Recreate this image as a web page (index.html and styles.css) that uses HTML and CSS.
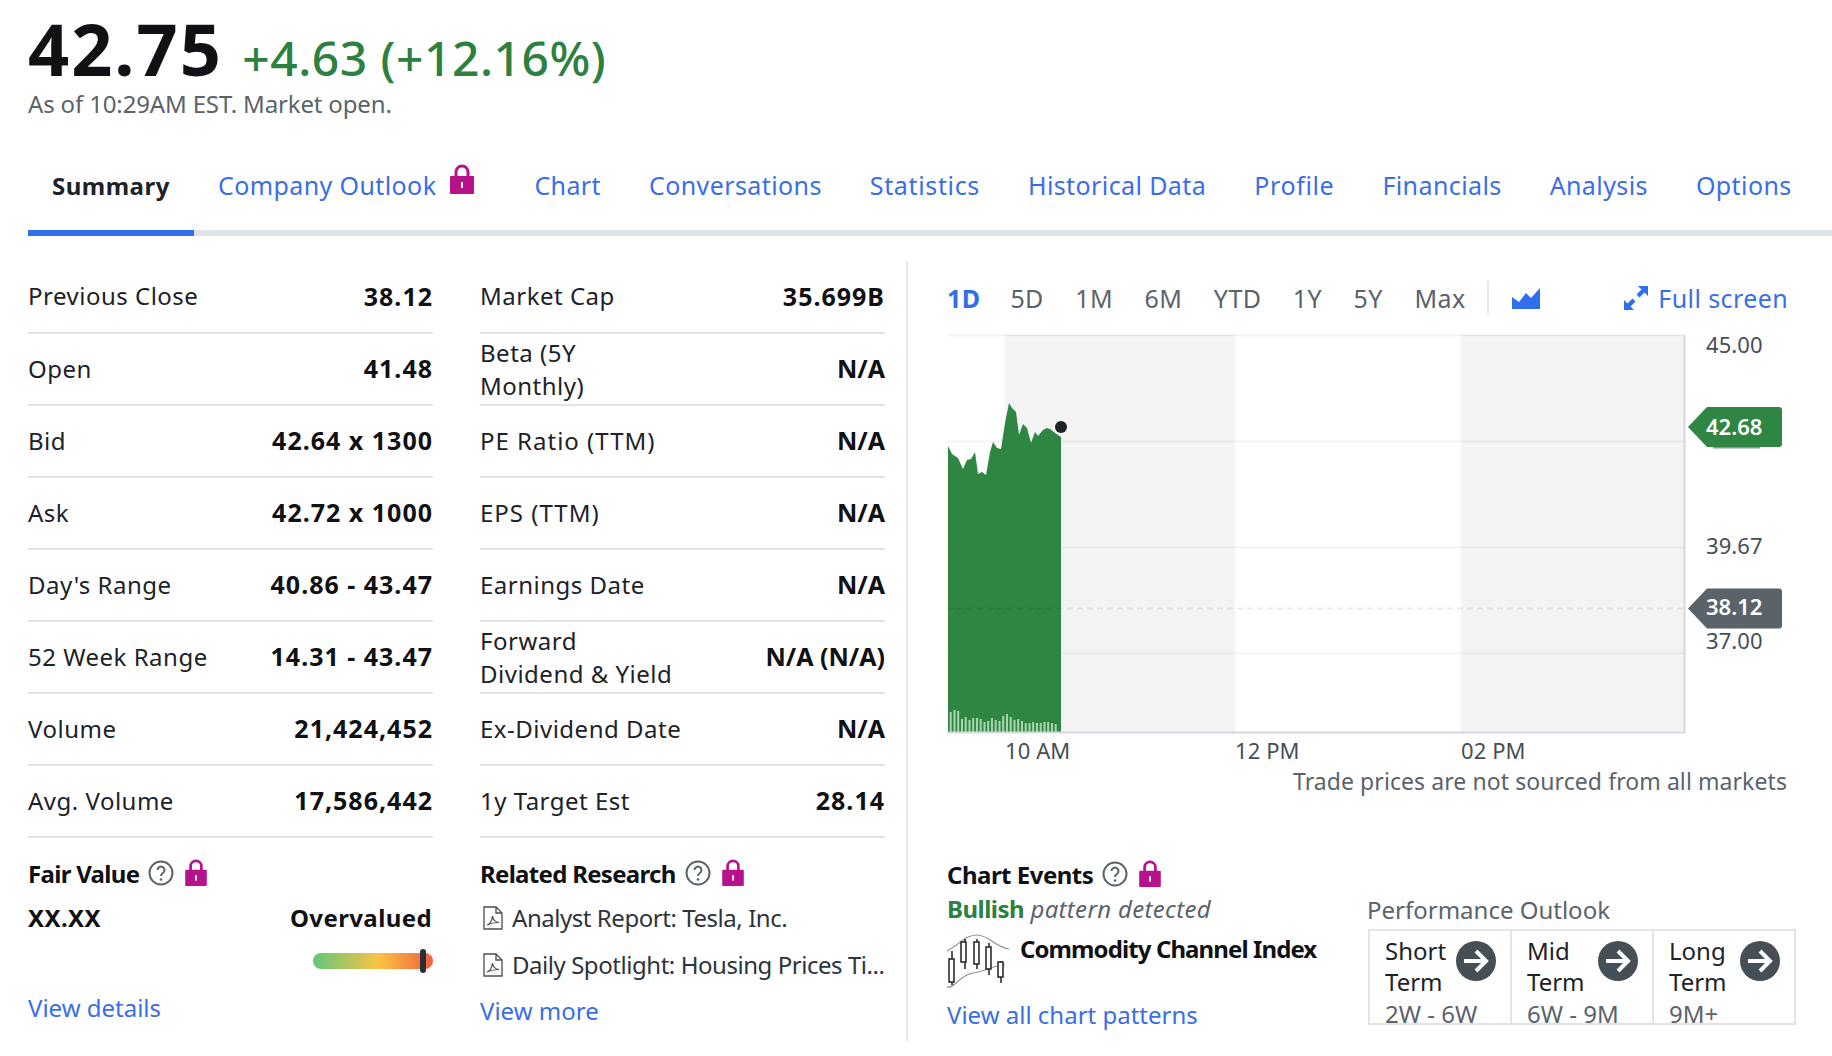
FILE: index.html
```html
<!DOCTYPE html>
<html lang="en">
<head>
  <meta charset="UTF-8" />
  <title>TSLA summary</title>
  <link rel="stylesheet" href="styles.css">
</head>
<body>
  <svg class="defs" width="0" height="0">
    <symbol id="lock" viewBox="0 0 24 30">
      <path d="M6 14V8a6 6 0 0 1 12 0v6" fill="none" stroke="#b8118c" stroke-width="3"/>
      <rect x="0" y="12" width="24" height="18" rx="1" fill="#b8118c"/>
      <rect x="11" y="18" width="2" height="6" fill="#fff"/>
    </symbol>
    <symbol id="help" viewBox="0 0 26 26">
      <circle cx="13" cy="13" r="11.5" fill="none" stroke="#5b636a" stroke-width="2"/>
      <path d="M9.5 10a3.5 3.5 0 1 1 5.4 3c-1.300.9-1.900 1.500-1.900 3" fill="none" stroke="#5b636a" stroke-width="2"/>
      <circle cx="13" cy="19.500" r="1.300" fill="#5b636a"/>
    </symbol>
    <symbol id="pdf" viewBox="0 0 20 24">
      <path d="M1 1h12l6 6v16H1zM13 1v6h6" fill="none" stroke="#464e56" stroke-width="1.300"/>
      <path d="M4 19c3-1 5-5 5.500-9 .5 4 2 6 6.500 6.500-4 0-8 .5-12 2.500z" fill="none" stroke="#464e56" stroke-width="1.200"/>
    </symbol>
    <symbol id="go" viewBox="0 0 40 40">
      <circle cx="20" cy="20" r="20" fill="#464e56"/>
      <path d="M8 20h22M20 10l10 10-10 10" fill="none" stroke="#fff" stroke-width="4"/>
    </symbol>
  </svg>

  <header class="quote">
    <span class="price">42.75</span>
    <span class="change">+4.63 (+12.16%)</span>
    <div class="as-of">As of 10:29AM EST. Market open.</div>
  </header>

  <nav class="tabs">
    <a class="tab active">Summary</a>
    <a class="tab tab-locked">Company Outlook <svg class="tab-lock"><use href="#lock"/></svg></a>
    <a class="tab">Chart</a>
    <a class="tab">Conversations</a>
    <a class="tab tab-wide">Statistics</a>
    <a class="tab">Historical Data</a>
    <a class="tab tab-wide">Profile</a>
    <a class="tab">Financials</a>
    <a class="tab">Analysis</a>
    <a class="tab">Options</a>
  </nav>

  <main class="main">
    <section class="left">
      <div class="col">
        <table class="stats">
          <tr><td>Previous Close</td><th>38.12</th></tr>
          <tr><td>Open</td><th>41.48</th></tr>
          <tr><td>Bid</td><th>42.64 x 1300</th></tr>
          <tr><td>Ask</td><th>42.72 x 1000</th></tr>
          <tr><td>Day's Range</td><th>40.86 - 43.47</th></tr>
          <tr><td>52 Week Range</td><th>14.31 - 43.47</th></tr>
          <tr><td>Volume</td><th>21,424,452</th></tr>
          <tr><td>Avg. Volume</td><th>17,586,442</th></tr>
        </table>
        <div class="block-title">Fair Value <svg class="ic-help"><use href="#help"/></svg> <svg class="ic-lock"><use href="#lock"/></svg></div>
        <div class="fair">
          <b>XX.XX</b>
          <b>Overvalued</b>
        </div>
        <div class="gauge"><i></i></div>
        <a class="link details">View details</a>
      </div>
      <div class="col">
        <table class="stats">
          <tr><td>Market Cap</td><th>35.699B</th></tr>
          <tr><td class="two">Beta (5Y<br>Monthly)</td><th class="na">N/A</th></tr>
          <tr><td class="caps">PE Ratio (TTM)</td><th class="na">N/A</th></tr>
          <tr><td class="caps">EPS (TTM)</td><th class="na">N/A</th></tr>
          <tr><td>Earnings Date</td><th class="na">N/A</th></tr>
          <tr><td class="two">Forward<br>Dividend &amp; Yield</td><th class="na">N/A (N/A)</th></tr>
          <tr><td>Ex-Dividend Date</td><th class="na">N/A</th></tr>
          <tr><td>1y Target Est</td><th>28.14</th></tr>
        </table>
        <div class="block-title">Related Research <svg class="ic-help"><use href="#help"/></svg> <svg class="ic-lock"><use href="#lock"/></svg></div>
        <div class="reports">
          <div class="report"><svg class="ic-pdf"><use href="#pdf"/></svg>Analyst Report: Tesla, Inc.</div>
          <div class="report"><svg class="ic-pdf"><use href="#pdf"/></svg>Daily Spotlight: Housing Prices Ti...</div>
        </div>
        <a class="link more">View more</a>
      </div>
    </section>

    <section class="right">
      <div class="ranges">
        <a class="range on">1D</a>
        <a class="range">5D</a>
        <a class="range">1M</a>
        <a class="range">6M</a>
        <a class="range">YTD</a>
        <a class="range">1Y</a>
        <a class="range">5Y</a>
        <a class="range">Max</a>
        <span class="range-sep"></span>
        <svg class="ic-area" viewBox="0 0 28 21"><path d="M0 9l7 5 7-9 5 5 9-10v21H0z" fill="#2f6fed"/></svg>
        <a class="fullscreen">
          <svg class="ic-full" viewBox="0 0 24 24"><path d="M14 0h10v10l-3.500-3.500-5 5-3-3 5-5zM10 24H0V14l3.500 3.500 5-5 3 3-5 5z" fill="#2f6fed"/></svg>
          Full screen
        </a>
      </div>

      <svg class="chart" viewBox="947 320 885 450">
        <rect x="1005" y="335" width="230" height="397" fill="#f4f4f5"/>
        <rect x="1461" y="335" width="223" height="397" fill="#f4f4f5"/>
        <path d="M947 335.500H1684M947 441.500H1684M947 547.500H1684M947 653.500H1684" stroke="#000" stroke-opacity=".05" stroke-width="2"/>
        <path d="M948 446L952 454 958 458 963 469 967 460 971 459 975 452 978 474 982 472 986 475 990 452 993 442 997 448 1001 449 1005 423 1009 403 1012 408 1016 412 1019 435 1023 424 1027 428 1031 443 1035 432 1038 436 1043 430 1047 428 1050 429 1055 433 1061 437V732H948z" fill="#2f8642"/>
        <path d="M947 608.500H1684" stroke="#000" stroke-opacity=".08" stroke-width="2" stroke-dasharray="6 4"/>
        <path d="M950.700 732v-20M954.500 732v-22M958.200 732v-21M962 732v-13M965.700 732v-15M969.500 732v-12M973.200 732v-14M977 732v-14M980.700 732v-13M984.500 732v-10M988.200 732v-11M992 732v-14M995.700 732v-12M999.500 732v-11M1003.200 732v-16M1007 732v-18M1010.700 732v-15M1014.500 732v-12M1018.200 732v-13M1022 732v-11M1025.700 732v-9M1029.500 732v-9M1033.200 732v-10M1037 732v-9M1040.700 732v-9M1044.500 732v-10M1048.200 732v-10M1052 732v-9M1055.700 732v-8" stroke="#a9d5ae" stroke-width="2"/>
        <path d="M947 732.500H1685M1684.500 335V733" stroke="#d5d8e0" stroke-width="2" fill="none"/>
        <circle cx="1061" cy="427" r="6" fill="#1d2228"/>
        <g class="axis">
          <text x="1706" y="353">45.00</text>
          <text x="1706" y="554">39.67</text>
          <text x="1706" y="649">37.00</text>
          <text x="1005" y="759">10 AM</text>
          <text x="1235" y="759">12 PM</text>
          <text x="1461" y="759">02 PM</text>
        </g>
        <path d="M1713 447.800H1760" stroke="#464e56" stroke-opacity=".6" stroke-width="1.500"/>
        <path d="M1688 427l19-20h72a3 3 0 0 1 3 3v34a3 3 0 0 1-3 3h-72z" fill="#2f8642"/>
        <path d="M1688 608.500l19-20h72a3 3 0 0 1 3 3v34a3 3 0 0 1-3 3h-72z" fill="#5b636a"/>
        <g class="axis-tag">
          <text x="1706" y="435">42.68</text>
          <text x="1706" y="615">38.12</text>
        </g>
      </svg>
      <p class="disclaimer">Trade prices are not sourced from all markets</p>

      <div class="block-title events">Chart Events <svg class="ic-help"><use href="#help"/></svg> <svg class="ic-lock"><use href="#lock"/></svg></div>
      <div class="lower">
        <div class="pattern">
          <div class="bullish"><b>Bullish</b> <em>pattern detected</em></div>
          <div class="pattern-row">
            <svg class="ic-candles" viewBox="0 0 62 56">
              <path d="M0 18C12 12 18 2 30 2s18 12 32 14M0 54c8 2 12-12 26-14s20-8 32-8" fill="none" stroke="#8a9096" stroke-width="1.200"/>
              <g fill="#fff" stroke="#1d2228" stroke-width="1.500">
                <path d="M5 18v34M18 6v30M30 6v30M42 10v32M54 28v22"/>
                <rect x="2" y="26" width="5" height="23"/>
                <rect x="14" y="9" width="5" height="20"/>
                <rect x="27" y="9" width="5" height="22"/>
                <rect x="39" y="14" width="5" height="22"/>
                <rect x="51" y="29" width="5" height="15"/>
              </g>
            </svg>
            <b>Commodity Channel Index</b>
          </div>
          <a class="link all">View all chart patterns</a>
        </div>
        <div class="outlook">
          <div class="outlook-title">Performance Outlook</div>
          <div class="outlook-box">
            <div class="term">
              <div class="term-text">Short Term<small>2W - 6W</small></div>
              <svg class="ic-go"><use href="#go"/></svg>
            </div>
            <div class="term">
              <div class="term-text">Mid Term<small>6W - 9M</small></div>
              <svg class="ic-go"><use href="#go"/></svg>
            </div>
            <div class="term">
              <div class="term-text">Long Term<small>9M+</small></div>
              <svg class="ic-go"><use href="#go"/></svg>
            </div>
          </div>
        </div>
      </div>
    </section>
  </main>
</body>
</html>
```

FILE: styles.css
```css
* {
  box-sizing: border-box;
}

html, body {
  margin: 0;
  height: 1056px;
  overflow: hidden;
}

body {
  padding-left: 28px;
  background: #fff;
  color: #1d2228;
  font-family: "Noto Sans", sans-serif;
  font-size: 24px;
}

.defs {
  position: absolute;
}

a {
  text-decoration: none;
}

.link {
  color: #3a6ee8;
  display: block;
}

/* Kepala harga */
.quote {
  height: 140px;
  padding-top: 5px;
}

.price {
  font-size: 72px;
  font-weight: 700;
  line-height: 86px;
  letter-spacing: 2px;
  color: #0f1114;
}

.change {
  font-size: 48px;
  font-weight: 500;
  letter-spacing: 0.5px;
  margin-left: 13px;
  color: #2c8040;
}

.as-of {
  margin-top: -3px;
  line-height: 32px;
  letter-spacing: -0.15px;
  color: #5b636a;
}

/* Tab */
.tabs {
  display: flex;
  height: 96px;
  border-bottom: 6px solid #e0e4e9;
}

.tab {
  display: flex;
  align-items: center;
  height: 96px;
  padding: 0 24px;
  border-bottom: 6px solid transparent;
  color: #3a6ee8;
  font-size: 25px;
  letter-spacing: 0.4px;
  white-space: nowrap;
}

.tab-wide {
  letter-spacing: 0.65px;
}

.tab.active {
  color: #1d2228;
  font-weight: 700;
  font-size: 24px;
  letter-spacing: 0.5px;
  border-bottom-color: #2f6fed;
}

.tab-lock {
  width: 24px;
  height: 30px;
  margin: 0 36px 12px 14px;
}

.tab-locked {
  padding-right: 0;
}

/* Isi utama */
.main {
  display: flex;
  margin-top: 25px;
  height: 780px;
}

.left {
  display: flex;
  gap: 48px;
  width: 857px;
  flex: none;
}

.col {
  width: 404px;
  flex: none;
}

.stats {
  width: 405px;
  border-collapse: collapse;
}

.stats tr {
  height: 72px;
  border-bottom: 2px solid #e0e4e9;
}

.stats td {
  padding: 0 0 2px;
  line-height: 33px;
  letter-spacing: 0.5px;
  white-space: nowrap;
}

.stats td.two {
  padding: 0 0 1px;
}

.stats td.caps {
  letter-spacing: 1px;
}

.stats th {
  padding: 0 0 2px;
  font-size: 25px;
  font-weight: 700;
  letter-spacing: 1px;
  text-align: right;
  white-space: nowrap;
  color: #0f1114;
}

.stats th.na {
  letter-spacing: 0;
}

.block-title {
  display: flex;
  align-items: center;
  gap: 8px;
  margin-top: 19px;
  height: 32px;
  font-weight: 700;
  letter-spacing: -0.7px;
  color: #0f1114;
}

.ic-help {
  width: 26px;
  height: 26px;
  margin-left: 1px;
}

.ic-lock {
  width: 22px;
  height: 27px;
  margin: -2px 0 0 3px;
}

.fair {
  display: flex;
  justify-content: space-between;
  margin-top: 13px;
  line-height: 32px;
  letter-spacing: 0.4px;
  color: #0f1114;
}

.gauge {
  position: relative;
  width: 120px;
  height: 16px;
  margin: 19px 0 0 285px;
  border-radius: 8px;
  background: linear-gradient(90deg, #62c77b 0%, #fac343 55%, #f0603f 100%);
}

.gauge i {
  position: absolute;
  left: 107px;
  top: -4px;
  width: 6px;
  height: 24px;
  border-radius: 3px;
  background: #2a2f36;
}

.details {
  margin-top: 22px;
}

.reports {
  margin-top: 5px;
}

.report {
  display: flex;
  align-items: center;
  height: 47px;
  letter-spacing: -0.45px;
  white-space: nowrap;
  color: #2d343b;
}

.ic-pdf {
  width: 20px;
  height: 24px;
  margin: 0 9px 0 3px;
  flex: none;
}

.more {
  margin-top: 6px;
}

/* Kolom grafik */
.right {
  flex: none;
  width: 889px;
  margin-left: 21px;
  padding-left: 39px;
  border-left: 2px solid #e6e8ec;
}

.ranges {
  display: flex;
  align-items: center;
  height: 59px;
  padding-top: 15px;
  color: #5b636a;
  font-size: 25px;
  letter-spacing: 0.4px;
}

.range {
  margin-right: 31.5px;
}

.range.on {
  color: #2f6fed;
  font-weight: 700;
  margin-right: 30px;
}

.range-sep {
  width: 2px;
  height: 34px;
  margin-left: -10px;
  background: #e6e8ec;
}

.ic-area {
  width: 28px;
  height: 21px;
  margin-left: 23px;
}

.fullscreen {
  display: flex;
  align-items: center;
  gap: 10px;
  margin-left: auto;
  margin-right: 7px;
  color: #3a6ee8;
}

.ic-full {
  width: 24px;
  height: 24px;
}

.chart {
  display: block;
  width: 885px;
  height: 450px;
  overflow: hidden;
}

.axis text {
  font-family: "Noto Sans", sans-serif;
  font-size: 22px;
  letter-spacing: 0.1px;
  fill: #464e56;
}

.axis-tag text {
  font-family: "Noto Sans", sans-serif;
  font-size: 22px;
  font-weight: 600;
  fill: #fff;
}

.disclaimer {
  margin: -4px 8px 0 0;
  font-size: 23px;
  letter-spacing: 0.08px;
  text-align: right;
  line-height: 30px;
  color: #5b636a;
}

.events {
  margin-top: 62px;
  letter-spacing: -0.5px;
}

.lower {
  display: flex;
}

.pattern {
  width: 421px;
  flex: none;
}

.bullish {
  line-height: 32px;
  margin-top: 3px;
}

.bullish b {
  color: #2c8040;
  letter-spacing: -0.5px;
}

.bullish em {
  color: #5b636a;
  letter-spacing: 0.3px;
}

.pattern-row {
  display: flex;
  gap: 11px;
  height: 58px;
  margin-top: 8px;
}

.pattern-row b {
  line-height: 32px;
  color: #0f1114;
  letter-spacing: -0.9px;
}

.ic-candles {
  width: 62px;
  height: 56px;
}

.all {
  margin-top: 7px;
}

.outlook {
  flex: 1;
}

.outlook-title {
  line-height: 32px;
  margin: 4px 0 0 -1px;
  color: #5b636a;
}

.outlook-box {
  display: flex;
  width: 428px;
  height: 96px;
  margin-top: 3px;
  border: 2px solid #e0e4e9;
  overflow: hidden;
}

.term {
  display: flex;
  flex: 1;
  gap: 9px;
  padding: 4px 0 0 15px;
  border-left: 2px solid #e0e4e9;
}

.term:first-child {
  border-left: 0;
}

.term-text {
  width: 62px;
  line-height: 31px;
}

.term-text small {
  display: block;
  margin-top: 1px;
  font-size: 24px;
  color: #5b636a;
  white-space: nowrap;
}

.ic-go {
  width: 40px;
  height: 40px;
  margin-top: 6px;
  flex: none;
}
```
